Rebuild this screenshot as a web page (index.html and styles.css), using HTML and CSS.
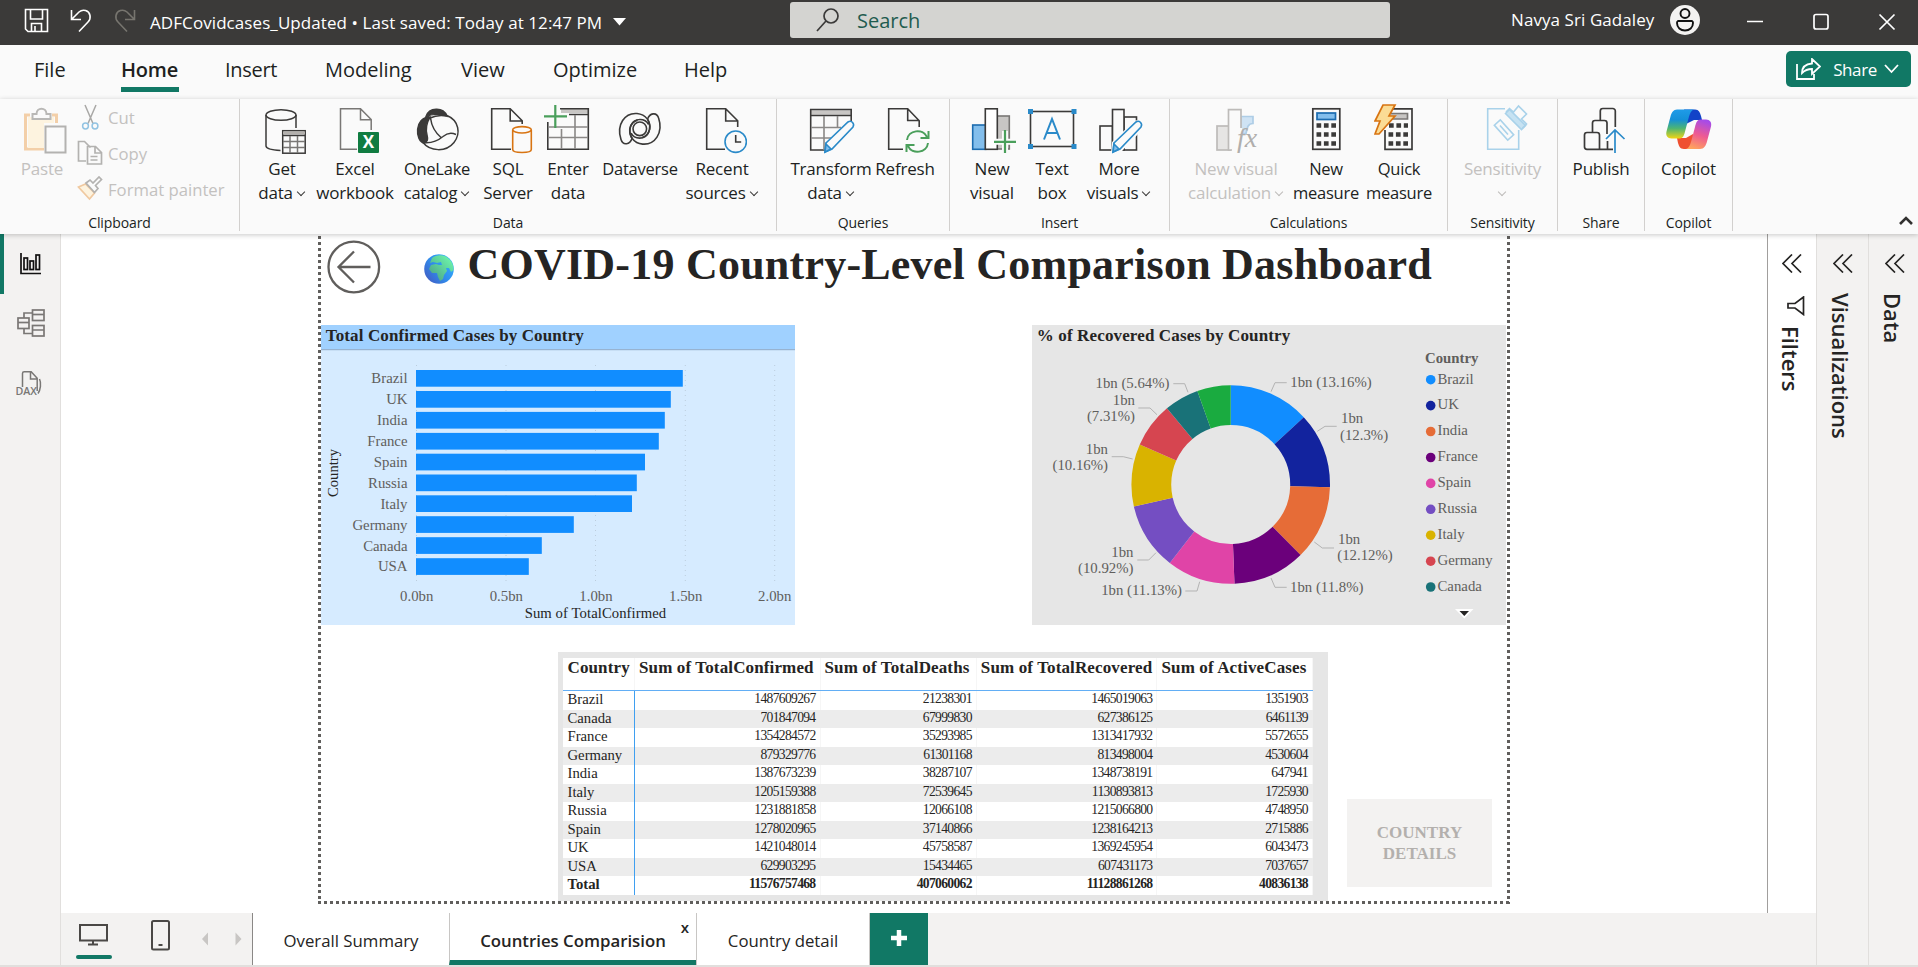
FILE: index.html
```html
<!DOCTYPE html>
<html lang="en">
<head>
<meta charset="utf-8">
<title>ADFCovidcases_Updated</title>
<link rel="stylesheet" href="styles.css">
</head>
<body>
<header class="titlebar">
  <svg class="quick-icons" width="150" height="45" viewBox="0 0 150 45" fill="none" stroke="#fff" stroke-width="1.6">
    <path d="M25.500 9.500h22v22h-19.500l-2.500-2.500zM30.500 9.500v9.500h12v-9.500M31.500 31.500v-8h10v8M35 26v5"/>
    <path d="M71.500 10v9.500h9.500M72 19l7-7c4-3.500 10-1.500 11 3.500.600 3-.5 5-2 6.500l-9 9.500"/>
    <path stroke="#77756f" d="M134.500 10v9.500h-9.500M134 19l-7-7c-4-3.500-10-1.500-11 3.500-.6 3 .5 5 2 6.500l9 9.500"/>
  </svg>
  <span class="doc-name">ADFCovidcases_Updated • Last saved: Today at 12:47 PM</span>
  <svg class="doc-caret" width="13" height="8" viewBox="0 0 13 8"><path d="M0 0h13l-6.500 7.500z" fill="#fff"/></svg>
  <div class="search">
    <svg width="24" height="24" viewBox="0 0 24 24" fill="none" stroke="#3b3a39" stroke-width="1.7"><circle cx="15" cy="8" r="7"/><path d="M10 13L1 23"/></svg>
    <span>Search</span>
  </div>
  <span class="user">Navya Sri Gadaley</span>
  <svg class="avatar" width="30" height="30" viewBox="0 0 30 30"><circle cx="15" cy="15" r="15" fill="#f3f2f1"/><g fill="none" stroke="#111" stroke-width="1.9"><circle cx="15" cy="8.500" r="4.500"/><path d="M8 16h14a2 2 0 0 1 1 2c0 4.500-3.500 7.500-8 7.500s-8-3-8-7.500a2 2 0 0 1 1-2z"/></g></svg>
  <svg class="win-icons" width="160" height="24" viewBox="1744 9 160 24" fill="none" stroke="#fff" stroke-width="1.700"><path d="M1747 21.500h16M1879.500 14.500l15 15M1894.500 14.500l-15 15"/><rect x="1814" y="14.500" width="14" height="14.500" rx="2"/></svg>
</header>

<nav class="menu">
  <span class="m-file">File</span><span class="m-home">Home</span><span class="m-insert">Insert</span><span class="m-model">Modeling</span><span class="m-view">View</span><span class="m-opt">Optimize</span><span class="m-help">Help</span>
  <button class="share">
    <svg width="25" height="22" viewBox="0 0 25 22" fill="none" stroke="#fff" stroke-width="1.800"><path d="M1 6v15h17v-5M6 15c0-6 4-9 10-9.500V1l8 7.500-8 7.500v-5c-4 0-7 1-10 4z"/></svg>
    <span>Share</span>
    <svg width="15" height="10" viewBox="0 0 15 10" fill="none" stroke="#fff" stroke-width="1.800"><path d="M1 1l6.500 7L14 1"/></svg>
  </button>
</nav>

<section class="ribbon">
  <div class="group g-clip">
    <div class="tools">
      <div class="tool off w-paste">
        <svg viewBox="17 104 50 50" fill="none" stroke-width="2"><path d="M30 115h-4.500v34H44M52 115h4.500v8" stroke="#f3cfa8" stroke-width="3" /><path d="M28 117h26v6H44v25H28z" fill="#fdf3df"/><path d="M32.500 119v-5h4c0-7 10-7 10 0h4v5z" fill="#fafafa" stroke="#b9b8b6"/><rect x="45.500" y="126.500" width="20" height="26" fill="#fafafa" stroke="#b3b2b0"/></svg>
        <span>Paste</span>
      </div>
      <div class="clip-list">
        <div><svg viewBox="77 104 28 28" fill="none" stroke-width="1.500"><path d="M85 105l8 18.500M96 105l-8 18.500" stroke="#a9a8a6"/><circle cx="85.500" cy="126" r="2.900" stroke="#92c3e2"/><circle cx="95" cy="126" r="2.900" stroke="#92c3e2"/></svg><span class="t-cut">Cut</span></div>
        <div><svg viewBox="77 140 28 28" fill="none" stroke="#b3b2b0" stroke-width="1.700"><path d="M86 161h-7.500v-19.500h6l6 6"/><path d="M87.500 146.500h8l6 6v11.500h-14zM95 147v6h6M90.500 156.500h7M90.500 160h7"/></svg><span class="t-copy">Copy</span></div>
        <div><svg viewBox="77 176 28 28" fill="none" stroke-width="1.700"><path d="M78.500 187l7-3 9 9-5 6z" fill="#fdf3df" stroke="#f0c9a0"/><path d="M86 183l4-3 3 3 6-6 2.500 2.500-6 6 2.500 3-3.500 4z" stroke="#b3b2b0"/></svg><span class="t-fp">Format painter</span></div>
      </div>
    </div>
    <div class="glabel">Clipboard</div>
  </div>

  <div class="group g-data">
    <div class="tools">
      <div class="tool w-get">
        <svg viewBox="257 104 50 50" fill="none" stroke="#3b3a39" stroke-width="1.500"><ellipse cx="281" cy="115" rx="15" ry="5.300"/><path d="M266 115v31c0 2.500 6 4 14.500 4.400M296 115v13"/><rect x="282.700" y="130.700" width="22.500" height="22.500"/><path d="M283 133h22" stroke="#b3b0ad" stroke-width="3"/><path d="M283 135.500h22" /><path d="M283 141.500h22M283 147.500h22M290 136v17M297.500 136v17" stroke="#797775"/></svg>
        <span>Get<br>data<i class="cv"></i></span>
      </div>
      <div class="tool w-excel">
        <svg viewBox="330 104 50 50" fill="none" stroke="#797775" stroke-width="1.500"><path d="M357 149.300h-16.500v-40.500h20l10.700 10.700V130M360.500 109v10.700h10.700"/><rect x="358" y="132" width="21" height="21" rx="1" fill="#107c41" stroke="none"/><text x="368.500" y="148" class="xl" text-anchor="middle">X</text></svg>
        <span>Excel<br>workbook</span>
      </div>
      <div class="tool w-lake">
        <svg viewBox="412 104 50 50" fill="none" stroke="#3b3a39" stroke-width="1.500"><path d="M426 116.500c3-9 17-10 21-.5-6-2.500-15-2-21 .5zM430 117c-16 0-15 24-6 26 4-1 4-4 3-8-2-8 0-13 3-18z" fill="#3b3a39"/><path d="M447 115.500c12 5 14 18 7 27-8 10-24 9-31 0 8 1 14-1 20-6 4-3.500 8-4.500 13-2M430.500 118c1 8 5 15 11 20M430 118c6-3 12-3 17-2"/></svg>
        <span class="tight">OneLake<br>catalog<i class="cv"></i></span>
      </div>
      <div class="tool w-sql">
        <svg viewBox="483 104 50 50" fill="none" stroke="#3b3a39" stroke-width="1.600"><path d="M511 149.300h-19.300v-40.500h18.500l12 12V124M510.200 109v12h12"/><g stroke="#d87412"><ellipse cx="522" cy="129.800" rx="9.300" ry="3.200"/><path d="M512.700 130v19.500c0 4 18.600 4 18.600 0V130"/></g></svg>
        <span>SQL<br>Server</span>
      </div>
      <div class="tool w-enter">
        <svg viewBox="543 104 50 50" fill="none" stroke="#3b3a39" stroke-width="1.600"><path d="M561 111h28" stroke="#c8c6c4" stroke-width="4"/><path d="M560 108.800h28.300v40.500h-40.500V122M569 114.500h19"/><path d="M548 127h40M548 137.500h40M561.500 129v20M575 115v34M561.500 127h6" stroke="#8a8886"/><path d="M544 116.300h23M555.300 105v23" stroke="#4a9f5b" stroke-width="2.200"/></svg>
        <span>Enter<br>data</span>
      </div>
      <div class="tool w-dv">
        <svg viewBox="615 104 50 50" fill="none" stroke="#3b3a39" stroke-width="1.600"><circle cx="639.800" cy="128.800" r="6.800"/><path id="dv" d="M632 138.500c-2 6-9 7.500-11 1-5-15 4-27 16-26 9 1 14 8 12.500 16-1 4-3.500 7-7.500 8M632 138.500c-5-9-1-19 8-19 4 0 7 2 8.500 5"/><use href="#dv" transform="rotate(180 639.800 128.800)"/></svg>
        <span class="tight">Dataverse</span>
      </div>
      <div class="tool w-recent">
        <svg viewBox="697 104 50 50" fill="none" stroke="#3b3a39" stroke-width="1.600"><path d="M725 149.300h-18.300v-40.500h19l12 12V127M725.700 109v12h12"/><circle cx="735.700" cy="141.700" r="10.700" stroke="#2a8ac9"/><path d="M735.700 135v7h5.500"/></svg>
        <span>Recent<br>sources<i class="cv"></i></span>
      </div>
    </div>
    <div class="glabel">Data</div>
  </div>

  <div class="group g-queries">
    <div class="tools">
      <div class="tool w-transform">
        <svg viewBox="806 104 50 50" fill="none" stroke="#3b3a39" stroke-width="1.600"><path d="M811 112.500h40" stroke="#c8c6c4" stroke-width="4.500"/><path d="M827 150h-16.300v-40.500h40.500V122M811 115.500h40"/><path d="M811 127.500h30M811 138h20M824 116v34M837.500 116v12" stroke="#8a8886"/><path d="M826 143l22-21c3-2 7 1 5 5l-21 22-7 3z" fill="#fafafa" stroke="#2a8ac9"/><path d="M826 144l5 5-6 3z" fill="#83beec" stroke="#2a8ac9"/></svg>
        <span>Transform<br>data<i class="cv"></i></span>
      </div>
      <div class="tool w-refresh">
        <svg viewBox="880 104 50 50" fill="none" stroke="#3b3a39" stroke-width="1.600"><path d="M903 149.300h-14.300v-40.500h19l11.500 12V127M907.700 109v11.500h11.500"/><g stroke="#4a9f5b" stroke-width="2"><path d="M907 140c1-10 16-12 20-3M928.500 131v7h-8M928 143c-1 10-16 12-20 3M906.500 152v-7h8"/></g></svg>
        <span>Refresh</span>
      </div>
    </div>
    <div class="glabel">Queries</div>
  </div>

  <div class="group g-insert">
    <div class="tools">
      <div class="tool w-newv">
        <svg viewBox="967 104 50 50" fill="none" stroke="#3b3a39" stroke-width="1.600"><rect x="997" y="116" width="12.300" height="33" fill="#c8c6c4" stroke="#797775"/><rect x="972.700" y="125" width="13" height="24.300" fill="#83beec" stroke="#1c6cb0"/><rect x="985.300" y="108.800" width="12" height="40.500" fill="#fff"/><path d="M995 141.800h21M1005 131v21" stroke="#fafafa" stroke-width="6"/><path d="M994 141.800h22M1005 130v23" stroke="#4a9f5b" stroke-width="2.200"/></svg>
        <span>New<br>visual</span>
      </div>
      <div class="tool w-text">
        <svg viewBox="1027 104 50 50" fill="none" stroke="#3b3a39" stroke-width="1.600"><rect x="1030.500" y="111.500" width="43" height="35"/><g fill="#2a8ac9" stroke="none"><rect x="1028" y="109" width="5" height="5"/><rect x="1071.500" y="109" width="5" height="5"/><rect x="1028" y="144" width="5" height="5"/><rect x="1071.500" y="144" width="5" height="5"/></g><path d="M1044 139.500l8-20.500 8 20.500M1046.500 133h11" stroke="#2a8ac9" stroke-width="2"/></svg>
        <span>Text<br>box</span>
      </div>
      <div class="tool w-more">
        <svg viewBox="1095 104 50 50" fill="none" stroke="#3b3a39" stroke-width="1.600"><rect x="1125" y="117" width="12.500" height="33"/><rect x="1101" y="126" width="12.500" height="24"/><rect x="1113.500" y="109.500" width="11.500" height="40.500" fill="#fafafa"/><path d="M1115 143l21-20c3-2 7 0 6 5l-20 21-8 4z" fill="#fafafa" stroke="#fafafa" stroke-width="4"/><path d="M1115 143l22-21c3-2 7 1 5 5l-21 22-7 3z" fill="#fafafa" stroke="#2a8ac9"/><path d="M1115 144l5 5-6 3z" fill="#83beec" stroke="#2a8ac9"/></svg>
        <span>More<br>visuals<i class="cv"></i></span>
      </div>
    </div>
    <div class="glabel">Insert</div>
  </div>

  <div class="group g-calc">
    <div class="tools">
      <div class="tool off w-nvc">
        <svg viewBox="1211 104 50 50" fill="none" stroke="#bdbbb9" stroke-width="1.700"><path d="M1241 116.500h12v7c-5 0-6 4-7 10h-5z" fill="#cfe3f4" stroke="#aecde6"/><rect x="1217" y="126" width="13" height="24" fill="#e6e5e4"/><path d="M1232 150h-3.500v-40.300h12.500V134" fill="#fafafa"/><path d="M1237 128h5v8h-5z" fill="#fafafa" stroke="none"/><text x="1237" y="146.500" class="fx">fx</text></svg>
        <span>New visual<br>calculation<i class="cv"></i></span>
      </div>
      <div class="tool w-nm">
        <svg viewBox="1301 104 50 50" fill="none" stroke="#3b3a39" stroke-width="1.700"><rect x="1312.800" y="108.800" width="27" height="40.500"/><rect x="1317" y="113" width="18.500" height="6.500" fill="#83beec" stroke="#1c6cb0"/><path d="M1316.500 125.500h20M1316.500 134.500h20M1316.500 143.500h20" stroke-width="4.500" stroke-dasharray="4.700 2.700"/></svg>
        <span class="tight">New<br>measure</span>
      </div>
      <div class="tool w-qm">
        <svg viewBox="1374 104 50 50" fill="none" stroke="#3b3a39" stroke-width="1.700"><path d="M1393 108.800h19v40.500h-27V130"/><path d="M1391 113.500h16.500v5.500h-18" fill="#c8c6c4" stroke="#797775"/><path d="M1389 125.500h19M1388.500 134.500h20M1388.500 143.500h20" stroke-width="4.500" stroke-dasharray="4.700 2.700"/><path d="M1383 105h12l-6 11h6l-16 18h-4l5-13h-5z" fill="#fbdc95" stroke="#d87412"/></svg>
        <span class="tight">Quick<br>measure</span>
      </div>
    </div>
    <div class="glabel">Calculations</div>
  </div>

  <div class="group g-sens">
    <div class="tools">
      <div class="tool off w-sens">
        <svg viewBox="1477 104 50 50" fill="none" stroke="#a9d2ea" stroke-width="1.600"><path d="M1504 108.800h-17.300v40.500h31V130"/><rect x="-10" y="-4" width="20" height="8" transform="translate(1503 130) rotate(48)"/><path d="M-6 0h12" transform="translate(1503 130) rotate(48)"/><path d="M1504.500 113.500l4-4 16 16-4 4z" fill="#c6e2f2"/><path d="M1505 112l3.500-3.500 4 3.500 5-6 8 8-5 5 5 5-4 4" /></svg>
        <span>Sensitivity<br><i class="cv solo"></i></span>
      </div>
    </div>
    <div class="glabel">Sensitivity</div>
  </div>

  <div class="group g-share">
    <div class="tools">
      <div class="tool w-pub">
        <svg viewBox="1576 104 50 50" fill="none" stroke="#3b3a39" stroke-width="1.700"><path d="M1615.300 127v-16a2.500 2.500 0 0 0-2.500-2.500h-10a2.500 2.500 0 0 0-2.500 2.500v9M1592.500 132v-9a2.500 2.500 0 0 1 2.500-2.500h9.500a2.500 2.500 0 0 1 2.500 2.500v11M1613 149.300h-26a2.500 2.500 0 0 1-2.500-2.500V135a2.500 2.500 0 0 1 2.500-2.500h10a2.500 2.500 0 0 1 2.500 2.500v14M1607.500 141v8"/><path d="M1615 153v-23M1606 139l9-9 9.500 9" stroke="#2a8ac9"/></svg>
        <span>Publish</span>
      </div>
    </div>
    <div class="glabel">Share</div>
  </div>

  <div class="group g-cop">
    <div class="tools">
      <div class="tool w-cop">
        <svg viewBox="1664 104 50 50">
          <defs>
            <linearGradient id="cpa" x1="0" y1="0" x2="0" y2="1"><stop offset="0" stop-color="#1f9be8"/><stop offset=".35" stop-color="#1490d8"/><stop offset=".65" stop-color="#4db573"/><stop offset="1" stop-color="#f2d512"/></linearGradient>
            <linearGradient id="cpb" x1=".6" y1="0" x2=".3" y2="1"><stop offset="0" stop-color="#a64be8"/><stop offset=".5" stop-color="#ee5a92"/><stop offset="1" stop-color="#ffa45c"/></linearGradient>
          </defs>
          <path d="M1684 109.500h11c4 0 5 3 6 6.500l1 4h-8l-8 4z" fill="#1243c8"/>
          <path d="M1695 149h-11c-4 0-5-3-6-6l-1-5h9l7-4z" fill="#ef5030"/>
          <path d="M1677 109.500h17c-3 1-4 4-5 7l-4.500 17c-1 3-2 5-6 5h-7c-4 0-6-3-5-7l4-15c1-4 3-7 6.500-7z" fill="url(#cpa)"/>
          <path d="M1701 119.500h5c4 0 6 3 5 7l-4 15c-1 4-3 7.500-7 7.500h-14c3-1 4-4 5-7l4-15c1-4 2-7.500 6-7.500z" fill="url(#cpb)"/>
        </svg>
        <span>Copilot</span>
      </div>
    </div>
    <div class="glabel">Copilot</div>
  </div>
  <svg class="collapse" width="14" height="9" viewBox="0 0 14 9" fill="none" stroke="#323130" stroke-width="2.600"><path d="M1 8l6-6 6 6"/></svg>
</section>

<main class="work">
  <aside class="rail">
    <svg width="60" height="170" viewBox="0 234 60 170" fill="none">
      <g stroke="#111" stroke-width="1.700"><path d="M21 253v20.500h20"/><rect x="24" y="258" width="3.500" height="11.500"/><rect x="30" y="261" width="3.500" height="8.500"/><rect x="36" y="255" width="3.500" height="14.500"/></g>
      <g stroke="#797775" stroke-width="1.700"><rect x="18" y="318" width="11" height="10.500"/><path d="M18 322.500h11"/><rect x="32.500" y="310" width="11.500" height="10.500"/><path d="M32.500 314.500h11.500"/><rect x="32.500" y="325.500" width="11.500" height="10.500"/><path d="M32.500 330h11.500M24 318v-5h8M24 329v4.500h8"/></g>
      <g stroke="#797775" stroke-width="1.500"><path d="M22.500 387v-13.500c0-1 .6-1.700 1.700-1.700h7l6 6.500V391M30.500 372v7h6.500M39.500 379c2 4 1 11-1.500 14.500"/></g>
      <text x="15.500" y="394.500" class="dax" textLength="21.500" lengthAdjust="spacingAndGlyphs">DAX</text>
    </svg>
  </aside>

  <div class="center">
    <div class="stage">
      <div class="canvas">
        <div class="report">
          <div class="head">
            <svg class="back" width="54" height="54" viewBox="327.500 240.500 54 54" fill="none" stroke="#605e5c" stroke-width="2.300"><circle cx="354.300" cy="267.500" r="25.300"/><path d="M371 267.500h-32M354.500 252l-15.500 15.500 15.500 15.500"/></svg>
            <svg class="globe" width="30" height="30" viewBox="0 0 30 30">
              <defs><linearGradient id="sea" x1="1" y1=".1" x2="0" y2=".9"><stop offset="0" stop-color="#35b6ff"/><stop offset=".5" stop-color="#2f8fee"/><stop offset="1" stop-color="#4358c0"/></linearGradient><linearGradient id="land" x1="1" y1="0" x2=".2" y2=".8"><stop offset="0" stop-color="#72ffb0"/><stop offset="1" stop-color="#4fae8c"/></linearGradient></defs>
              <circle cx="15" cy="15" r="14.800" fill="url(#sea)"/>
              <path d="M8 4c5-4 14-4 19 3 2 3 2.500 6 2.500 9l-2.500 2-2-4-3 0 1 3-3 4-1 4-3 2-2-4-1-4-5 0-3-4 2-4 5-1 3 1 3 0-1-3-4 1-4-1-3 1z" fill="url(#land)"/>
            </svg>
            <h1>COVID-19 Country-Level Comparison Dashboard</h1>
          </div>

          <div class="cards">
            <svg class="chart" width="474" height="300" viewBox="321 325 474 300">
              <rect x="321" y="325" width="475" height="300" fill="#d6ebff"/>
              <rect x="321" y="325" width="475" height="24.500" fill="#a0d1ff"/>
              <rect x="321" y="349.200" width="475" height="1" fill="#8ea9c6"/>
              <text x="325.800" y="341" class="ct" textLength="258">Total Confirmed Cases by Country</text>
              <path d="M416.500 365v219M506 365v219M595.500 365v219M685.300 365v219M774.700 365v219" stroke="#bccddd" stroke-width="1" stroke-dasharray="1 4"/>
              <g fill="#118dff">
                <rect x="416" y="370" width="266.800" height="16.700"/><rect x="416" y="391" width="254.800" height="16.700"/><rect x="416" y="411.900" width="248.800" height="16.700"/><rect x="416" y="432.900" width="242.800" height="16.700"/><rect x="416" y="453.700" width="229" height="16.700"/><rect x="416" y="474.500" width="220.800" height="16.700"/><rect x="416" y="495.300" width="216" height="16.700"/><rect x="416" y="516.200" width="157.800" height="16.700"/><rect x="416" y="537.200" width="125.800" height="16.700"/><rect x="416" y="558.200" width="112.800" height="16.700"/>
              </g>
              <g class="ax" text-anchor="end">
                <text x="407.500" y="383">Brazil</text><text x="407.500" y="404">UK</text><text x="407.500" y="425">India</text><text x="407.500" y="446">France</text><text x="407.500" y="467">Spain</text><text x="407.500" y="488">Russia</text><text x="407.500" y="509">Italy</text><text x="407.500" y="530">Germany</text><text x="407.500" y="551">Canada</text><text x="407.500" y="571">USA</text>
              </g>
              <g class="ax" text-anchor="middle">
                <text x="416.700" y="601">0.0bn</text><text x="506.300" y="601">0.5bn</text><text x="596" y="601">1.0bn</text><text x="685.700" y="601">1.5bn</text><text x="774.700" y="601">2.0bn</text>
              </g>
              <text x="524.700" y="618" class="at" textLength="141.500">Sum of TotalConfirmed</text>
              <text x="0" y="0" class="at" text-anchor="middle" transform="translate(338 473) rotate(-90)">Country</text>
            </svg>

            <svg class="chart donut" width="474" height="300" viewBox="1032 325 474 300">
              <rect x="1032" y="325" width="474" height="300" fill="#e6e6e6"/>
              <text x="1036.800" y="341" class="ct" textLength="253.500">% of Recovered Cases by Country</text>
              <g transform="rotate(-90 1230.700 484.500)" fill="none" stroke-width="39.800">
                <circle cx="1230.700" cy="484.500" r="79.400" pathLength="100" stroke="#118dff" stroke-dasharray="13.160 100"/>
                <circle cx="1230.700" cy="484.500" r="79.400" pathLength="100" stroke="#12239e" stroke-dasharray="12.300 100" stroke-dashoffset="-13.160"/>
                <circle cx="1230.700" cy="484.500" r="79.400" pathLength="100" stroke="#e66c37" stroke-dasharray="12.120 100" stroke-dashoffset="-25.460"/>
                <circle cx="1230.700" cy="484.500" r="79.400" pathLength="100" stroke="#6b007b" stroke-dasharray="11.800 100" stroke-dashoffset="-37.580"/>
                <circle cx="1230.700" cy="484.500" r="79.400" pathLength="100" stroke="#e044a7" stroke-dasharray="11.130 100" stroke-dashoffset="-49.380"/>
                <circle cx="1230.700" cy="484.500" r="79.400" pathLength="100" stroke="#744ec2" stroke-dasharray="10.920 100" stroke-dashoffset="-60.510"/>
                <circle cx="1230.700" cy="484.500" r="79.400" pathLength="100" stroke="#d9b300" stroke-dasharray="10.160 100" stroke-dashoffset="-71.430"/>
                <circle cx="1230.700" cy="484.500" r="79.400" pathLength="100" stroke="#d64550" stroke-dasharray="7.310 100" stroke-dashoffset="-81.590"/>
                <circle cx="1230.700" cy="484.500" r="79.400" pathLength="100" stroke="#197278" stroke-dasharray="5.640 100" stroke-dashoffset="-88.900"/>
                <circle cx="1230.700" cy="484.500" r="79.400" pathLength="100" stroke="#1aab40" stroke-dasharray="5.460 100" stroke-dashoffset="-94.540"/>
              </g>
              <path fill="none" stroke="#b3b3b3" d="M1271 391.700l4-9h11.700M1317.300 431.300l7.700-5h11.700M1314.300 542l8 6h11.700M1271 578l4 9.300h11.700M1199.700 581.700l-2.700 9.300h-11.700M1156 552.700l-7.300 7.300h-11.400M1132.700 459l-9.400-2.300h-11.600M1157 414.700l-7-6.700h-11.700M1188 392.300l-3.300-8.600h-11.400"/>
              <g class="ax">
                <text x="1290.300" y="387">1bn (13.16%)</text><text x="1341" y="423">1bn</text><text x="1340" y="439.500">(12.3%)</text><text x="1338" y="544">1bn</text><text x="1337.300" y="560">(12.12%)</text><text x="1290" y="592">1bn (11.8%)</text>
              </g>
              <g class="ax" text-anchor="end">
                <text x="1182" y="595">1bn (11.13%)</text><text x="1133.500" y="556.500">1bn</text><text x="1133.500" y="572.500">(10.92%)</text><text x="1108" y="453.500">1bn</text><text x="1108" y="469.500">(10.16%)</text><text x="1135" y="404.500">1bn</text><text x="1135" y="420.500">(7.31%)</text><text x="1169.500" y="388">1bn (5.64%)</text>
              </g>
              <text x="1425" y="363" class="ax lt">Country</text>
              <circle cx="1430.700" cy="379.700" r="4.800" fill="#118dff"/><circle cx="1430.700" cy="405.600" r="4.800" fill="#12239e"/><circle cx="1430.700" cy="431.500" r="4.800" fill="#e66c37"/><circle cx="1430.700" cy="457.500" r="4.800" fill="#6b007b"/><circle cx="1430.700" cy="483.400" r="4.800" fill="#e044a7"/><circle cx="1430.700" cy="509.300" r="4.800" fill="#744ec2"/><circle cx="1430.700" cy="535.200" r="4.800" fill="#d9b300"/><circle cx="1430.700" cy="561.200" r="4.800" fill="#d64550"/><circle cx="1430.700" cy="587" r="4.800" fill="#197278"/>
              <g class="ax">
                <text x="1437.500" y="384">Brazil</text><text x="1437.500" y="409">UK</text><text x="1437.500" y="435">India</text><text x="1437.500" y="461">France</text><text x="1437.500" y="487">Spain</text><text x="1437.500" y="513">Russia</text><text x="1437.500" y="539">Italy</text><text x="1437.500" y="565">Germany</text><text x="1437.500" y="591">Canada</text>
              </g>
              <path d="M1455 609h18.500l-9.200 9.500z" fill="#fff"/><path d="M1459.500 611h9.500l-4.700 5z" fill="#252423"/>
            </svg>
          </div>

          <div class="lower">
            <div class="tcard">
              <div class="tbl">
                <div class="tr th"><span>Country</span><span>Sum of TotalConfirmed</span><span>Sum of TotalDeaths</span><span>Sum of TotalRecovered</span><span>Sum of ActiveCases</span></div>
                <div class="tr"><span>Brazil</span><span>1487609267</span><span>21238301</span><span>1465019063</span><span>1351903</span></div>
                <div class="tr alt"><span>Canada</span><span>701847094</span><span>67999830</span><span>627386125</span><span>6461139</span></div>
                <div class="tr"><span>France</span><span>1354284572</span><span>35293985</span><span>1313417932</span><span>5572655</span></div>
                <div class="tr alt"><span>Germany</span><span>879329776</span><span>61301168</span><span>813498004</span><span>4530604</span></div>
                <div class="tr"><span>India</span><span>1387673239</span><span>38287107</span><span>1348738191</span><span>647941</span></div>
                <div class="tr alt"><span>Italy</span><span>1205159388</span><span>72539645</span><span>1130893813</span><span>1725930</span></div>
                <div class="tr"><span>Russia</span><span>1231881858</span><span>12066108</span><span>1215066800</span><span>4748950</span></div>
                <div class="tr alt"><span>Spain</span><span>1278020965</span><span>37140866</span><span>1238164213</span><span>2715886</span></div>
                <div class="tr"><span>UK</span><span>1421048014</span><span>45758587</span><span>1369245954</span><span>6043473</span></div>
                <div class="tr alt"><span>USA</span><span>629903295</span><span>15434465</span><span>607431173</span><span>7037657</span></div>
                <div class="tr total"><span>Total</span><span>11576757468</span><span>407060062</span><span>11128861268</span><span>40836138</span></div>
              </div>
            </div>
            <div class="detail-btn">COUNTRY<br>DETAILS</div>
          </div>
        </div>
      </div>
      <aside class="pane filters">
        <svg width="20" height="19" viewBox="0 0 20 19"><path d="M10 .5l-9 9 9 9M19 .5l-9 9 9 9"/></svg>
        <svg class="funnel" width="19" height="20" viewBox="0 0 19 20"><path d="M17.500 1v17.500L9 12H2V7.500h7z"/></svg>
        <span>Filters</span>
      </aside>
    </div>

    <footer class="pages">
      <svg width="191" height="52" viewBox="61 913 191 52" fill="none">
        <g stroke="#4a4846" stroke-width="2"><rect x="80" y="925" width="27" height="15.500"/><path d="M93 941v4M88 944.500h10" /><rect x="152" y="921" width="17" height="28.500" rx="1.500"/><path d="M158.500 945h4"/></g>
        <rect x="76" y="955" width="36" height="4" rx="2" fill="#117865"/>
        <path d="M208 932.500v13l-6-6.500zM235.500 932.500v13l6-6.500z" fill="#c8c6c4"/>
      </svg>
      <div class="tab t1"><span>Overall Summary</span></div>
      <div class="tab t2"><span>Countries Comparision</span><b class="close">x</b></div>
      <div class="tab t3"><span>Country detail</span></div>
      <div class="add"><svg width="16" height="16" viewBox="0 0 16 16"><path d="M8 0v16M0 8h16" stroke="#fff" stroke-width="4.500"/></svg></div>
    </footer>
  </div>

  <aside class="pane vis">
    <svg width="20" height="19" viewBox="0 0 20 19"><path d="M10 .5l-9 9 9 9M19 .5l-9 9 9 9"/></svg>
    <span>Visualizations</span>
  </aside>
  <aside class="pane data">
    <svg width="20" height="19" viewBox="0 0 20 19"><path d="M10 .5l-9 9 9 9M19 .5l-9 9 9 9"/></svg>
    <span>Data</span>
  </aside>
</main>
</body>
</html>
```

FILE: styles.css
```css
* { box-sizing: border-box; }
body {
  margin: 0;
  width: 1918px;
  height: 967px;
  overflow: hidden;
  display: flex;
  flex-direction: column;
  background: #fff;
  font-family: "Open Sans", "Noto Sans", sans-serif;
  color: #201f1e;
}
svg { display: block; flex: none; }

/* title bar */
.titlebar {
  height: 45px;
  flex: none;
  background: #3b3a39;
  color: #fff;
  display: flex;
  align-items: flex-start;
  white-space: nowrap;
}
.doc-name { width: 463px; font-size: 17px; line-height: 24px; padding-top: 11px; letter-spacing: 0.08px; }
.doc-caret { margin-top: 18px; margin-right: 164px; }
.search {
  width: 600px;
  height: 36px;
  margin-top: 2px;
  background: #d4d4d1;
  border-radius: 3px;
  display: flex;
  align-items: flex-start;
  padding: 6px 0 0 26px;
  gap: 17px;
  color: #1f5c4f;
  font-size: 20px;
  line-height: 26px;
}
.user { margin-left: 121px; width: 159px; font-size: 17px; line-height: 24px; padding-top: 8px; letter-spacing: 0.08px; }
.avatar { margin-top: 5px; }
.win-icons { margin: 9px 0 0 44px; }

/* menu row */
.menu {
  height: 54px;
  flex: none;
  background: #fafafa;
  display: flex;
  align-items: flex-start;
  padding-left: 34px;
  font-size: 20px;
  line-height: 28px;
  white-space: nowrap;
}
.menu > span { padding-top: 11px; }
.m-file { width: 87px; }
.m-home { width: 58px; font-weight: 600; height: 47px; border-bottom: 5px solid #117865; margin-right: 46px; letter-spacing: -0.2px; }
.m-insert { width: 100px; letter-spacing: -0.3px; }
.m-model { width: 136px; }
.m-view { width: 92px; }
.m-opt { width: 131px; }
.m-help { width: 42px; }
.share {
  margin: 6px 0 0 1060px;
  width: 125px;
  height: 36px;
  border: 0;
  border-radius: 5px;
  background: #117865;
  color: #fff;
  font: 17px/24px "Open Sans", sans-serif;
  display: flex;
  align-items: center;
  padding: 0 10px;
}
.share span { margin: 2px 7px 0 12px; width: 44px; letter-spacing: -0.4px; }

/* ribbon */
.ribbon {
  height: 135px;
  flex: none;
  background: #fafafa;
  display: flex;
  align-items: flex-start;
  position: relative;
  z-index: 1;
  box-shadow: 0 1px 5px rgba(0, 0, 0, .22);
  white-space: nowrap;
}
.group { height: 132px; border-right: 1px solid #d2d0ce; display: flex; flex-direction: column; flex: none; }
.tools { height: 113px; padding-top: 5px; display: flex; flex: none; }
.glabel { font-size: 14px; line-height: 20px; text-align: center; padding-top: 1px; letter-spacing: -0.1px; }
.tool { display: flex; flex-direction: column; align-items: center; gap: 3px; flex: none; }
.tool > svg { width: 50px; height: 50px; }
.tool > span { font-size: 17px; line-height: 24px; text-align: center; letter-spacing: -0.2px; }
.tool > span.tight { font-size: 16.5px; letter-spacing: -0.25px; }
.off, .clip-list { color: #c3c1bf; }
.cv { display: inline-block; width: 6px; height: 6px; border: solid #3b3a39; border-width: 0 1.800px 1.800px 0; transform: rotate(45deg); margin: 0 2px 4px 5px; }
.off .cv { border-color: #bdbbb9; }
.cv.solo { margin-left: 2px; }
.g-clip { width: 240px; }
.g-data { width: 537px; padding-left: 12px; }
.g-queries { width: 173px; }
.g-queries .tools { padding-left: 10px; }
.g-insert { width: 220px; }
.g-insert .tools { padding-left: 10px; }
.g-calc { width: 278px; }
.g-calc .tools { padding-left: 12px; }
.g-sens { width: 110px; }
.g-share { width: 87px; }
.g-cop { width: 88px; }
.g-data .glabel { margin-left: -12px; }
.w-paste { width: 78px; padding-left: 6px; }
.w-get { width: 60px; } .w-excel { width: 86px; } .w-lake { width: 78px; } .w-sql { width: 64px; }
.w-enter { width: 56px; } .w-dv { width: 88px; } .w-recent { width: 76px; }
.w-transform { width: 88px; } .w-refresh { width: 60px; }
.w-newv { width: 64px; } .w-text { width: 56px; } .w-more { width: 78px; }
.w-nvc { width: 108px; } .w-nm { width: 72px; } .w-qm { width: 74px; }
.w-sens { width: 109px; } .w-pub { width: 86px; } .w-cop { width: 87px; }
.xl { font: 700 17px "Open Sans", sans-serif; fill: #fff; stroke: none; }
.fx { font: italic 28px "Liberation Serif", serif; fill: #b0aeac; stroke: none; }
.clip-list { margin-left: -1px; }
.clip-list > div { display: flex; align-items: flex-start; height: 36px; gap: 3px; font-size: 16.7px; line-height: 28px; }
.clip-list svg { width: 28px; height: 28px; }
.collapse { margin: 117px 0 0 166px; }

/* workspace */
.work { flex: 1; display: flex; min-height: 0; border-bottom: 2px solid #e1dfdd; }
.rail { width: 61px; flex: none; background: #f3f2f1; border-right: 1px solid #e1dfdd; background-image: linear-gradient(#117865, #117865); background-size: 4px 60px; background-repeat: no-repeat; }
.dax { font: 600 10px "Open Sans", sans-serif; fill: #797775; }
.center { width: 1755px; display: flex; flex-direction: column; flex: none; }
.stage { height: 679px; display: flex; flex: none; }
.canvas { width: 1706px; padding-left: 257px; }
.report {
  width: 1192px;
  height: 670px;
  padding: 0 3px 3px;
  background-image:
    repeating-linear-gradient(to bottom, transparent 0 2px, #605e5c 2px 5px, transparent 5px 6px),
    repeating-linear-gradient(to bottom, transparent 0 2px, #605e5c 2px 5px, transparent 5px 6px),
    repeating-linear-gradient(to right, #605e5c 0 3px, transparent 3px 6px);
  background-size: 3px 100%, 3px 100%, 100% 3px;
  background-position: left top, right top, left bottom;
  background-repeat: no-repeat;
  font-family: "Liberation Serif", "Times New Roman", serif;
}
.head { height: 91px; display: flex; align-items: flex-start; }
.back { margin: 6px 0 0 6px; }
.globe { margin: 20px 13.500px 0 43px; }
h1 { margin: 6px 0 0; font-size: 44px; line-height: 50px; font-weight: 700; color: #252423; white-space: nowrap; letter-spacing: 0.23px; }
.cards { display: flex; justify-content: space-between; height: 300px; padding-right: 1px; }
.ct { font-size: 17px; font-weight: 700; fill: #252423; }
.ax { font-size: 14.8px; fill: #605e5c; }
.lt { font-weight: 700; }
.at { font-size: 14.7px; fill: #252423; }
.lower { display: flex; padding: 27px 0 0 237px; }
.tcard { width: 770px; height: 249px; background: #e6e6e6; padding: 5.500px 0 0 5px; }
.tbl { width: 750px; background: #fff; color: #252423; }
.tr { display: grid; grid-template-columns: 72px 185.500px 156.300px 180.700px 155.500px; height: 18.550px; font-size: 13.6px; line-height: 16px; white-space: nowrap; }
.tr span { text-align: right; padding-right: 4px; letter-spacing: -0.68px; border-right: 1px solid #f6f6f6; }
.tr span:first-child { text-align: left; padding: 0 0 0 4.500px; font-size: 14.7px; letter-spacing: 0; border-right: 1px solid #3f9ff0; }
.tr.alt { background: #ececec; }
.tr.alt span:not(:first-child) { border-color: #ececec; }
.tr.th { height: 33.500px; border-bottom: 1px solid #62aef5; font-weight: 700; }
.tr.th span { text-align: left; font-size: 17px; padding: 2px 0 0 4px; letter-spacing: 0.13px; }
.tr.th span:first-child { font-size: 17px; padding: 2px 0 0 4.500px; border-color: #f6f6f6; }
.tr.total { font-weight: 700; }
.detail-btn { width: 145px; height: 88px; margin: 147px 0 0 19px; background: #f3f2f1; color: #b3b0ad; font-size: 17px; font-weight: 700; line-height: 20.500px; text-align: center; padding-top: 24px; }

.pane { border-left: 1px solid #e1dfdd; background: #f3f2f1; flex: none; }
.pane svg { fill: none; stroke: #252423; stroke-width: 1.7; margin-top: 20px; }
.pane span { display: block; writing-mode: vertical-rl; font-size: 22px; font-weight: 600; line-height: 26px; color: #252423; }
.filters { width: 49px; background: #fff; border-left-color: #a19f9d; padding-left: 14px; }
.filters .funnel { margin: 23px 0 0 4px; }
.filters span { margin: 10px 0 0 -4px; }
.vis { width: 52px; padding-left: 16px; }
.vis span, .data span { margin: 20px 0 0 -5px; }
.data { width: 50px; padding-left: 16px; }

/* page tabs */
.pages { height: 52px; background: #f3f2f1; display: flex; font-size: 16.8px; color: #252423; white-space: nowrap; }
.tab { background: #fff; border-left: 1px solid #c8c6c4; position: relative; text-align: center; line-height: 24px; padding-top: 16px; }
.t1 { width: 197px; border-left-color: #8a8886; }
.t2 { width: 247px; font-weight: 600; border-bottom: 5px solid #117865; }
.t3 { width: 173px; }
.close { position: absolute; right: 7px; top: 2px; font-size: 15px; font-weight: 600; }
.add { width: 59px; background: #117865; display: flex; align-items: center; justify-content: center; padding-bottom: 2px; border-left: 1px solid #c8c6c4; }
```
